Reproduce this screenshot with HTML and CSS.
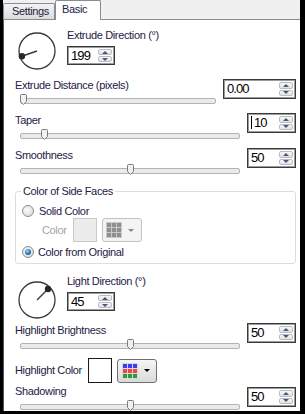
FILE: index.html
```html
<!DOCTYPE html>
<html lang="en">
<head>
    <meta charset="UTF-8">
    <title>Extrude - Basic</title>
    <link rel="stylesheet" href="styles.css">
</head>
<body>

<div class="window">
    <div class="tabs">
        <div class="tab">Settings</div>
        <div class="tab active">Basic</div>
    </div>

    <div class="panel">
        <!-- Extrude direction dial -->
        <div class="dial-row" id="row-direction">
            <svg class="dial" width="40" height="40" viewBox="0 0 40 40">
                <circle class="rim" cx="20" cy="20" r="18"/>
                <line x1="20" y1="20" x2="4.9" y2="25.2"/>
                <circle class="knob" cx="4.9" cy="25.2" r="3.2"/>
            </svg>
            <div class="dial-fields">
                <div class="label">Extrude Direction (°)</div>
                <div class="spin narrow">
                    <span class="value">199</span>
                    <span class="arrows"><span class="up"></span><span class="down"></span></span>
                </div>
            </div>
        </div>

        <div class="slider-row" id="row-distance">
            <div class="slider-main">
                <div class="label">Extrude Distance (pixels)</div>
                <div class="slider">
                    <svg class="thumb" style="left: calc((100% - 7px) * 0)" width="7" height="11" viewBox="0 0 7 11"><path d="M0.5 1.5Q0.5 0.5 1.5 0.5H5.5Q6.5 0.5 6.5 1.5V7.5L3.5 10.5L0.5 7.5Z"/></svg>
                </div>
            </div>
            <div class="spin wide">
                <span class="value">0.00</span>
                <span class="arrows"><span class="up"></span><span class="down"></span></span>
            </div>
        </div>

        <div class="slider-row" id="row-taper">
            <div class="slider-main">
                <div class="label">Taper</div>
                <div class="slider">
                    <svg class="thumb" style="left: calc((100% - 7px) * 0.1)" width="7" height="11" viewBox="0 0 7 11"><path d="M0.5 1.5Q0.5 0.5 1.5 0.5H5.5Q6.5 0.5 6.5 1.5V7.5L3.5 10.5L0.5 7.5Z"/></svg>
                </div>
            </div>
            <div class="spin">
                <span class="value"><span class="caret"></span>10</span>
                <span class="arrows"><span class="up"></span><span class="down"></span></span>
            </div>
        </div>

        <div class="slider-row" id="row-smooth">
            <div class="slider-main">
                <div class="label">Smoothness</div>
                <div class="slider">
                    <svg class="thumb" style="left: calc((100% - 7px) * 0.5)" width="7" height="11" viewBox="0 0 7 11"><path d="M0.5 1.5Q0.5 0.5 1.5 0.5H5.5Q6.5 0.5 6.5 1.5V7.5L3.5 10.5L0.5 7.5Z"/></svg>
                </div>
            </div>
            <div class="spin">
                <span class="value">50</span>
                <span class="arrows"><span class="up"></span><span class="down"></span></span>
            </div>
        </div>

        <!-- Side faces group -->
        <fieldset class="group">
            <legend>Color of Side Faces</legend>
            <div class="option" id="opt-solid">
                <span class="radio"></span>
                <span>Solid Color</span>
            </div>
            <div class="color-row disabled">
                <span class="label">Color</span>
                <span class="swatch"></span>
                <span class="color-drop">
                    <svg width="16" height="16" viewBox="0 0 16 16">
                        <rect width="16" height="16" fill="#c9c9c9"/>
                        <g fill="#8f8f8f">
                            <rect x="1" y="1" width="4" height="4"/><rect x="6" y="1" width="4" height="4"/><rect x="11" y="1" width="4" height="4"/>
                            <rect x="1" y="6" width="4" height="4"/><rect x="6" y="6" width="4" height="4"/><rect x="11" y="6" width="4" height="4"/>
                            <rect x="1" y="11" width="4" height="4"/><rect x="6" y="11" width="4" height="4"/><rect x="11" y="11" width="4" height="4"/>
                        </g>
                    </svg>
                    <span class="drop-arrow"></span>
                </span>
            </div>
            <div class="option" id="opt-original">
                <span class="radio checked"></span>
                <span>Color from Original</span>
            </div>
        </fieldset>

        <!-- Light direction dial -->
        <div class="dial-row" id="row-light">
            <svg class="dial" width="40" height="40" viewBox="0 0 40 40">
                <circle class="rim" cx="20" cy="20" r="18"/>
                <line x1="20" y1="20" x2="31" y2="9"/>
                <circle class="knob" cx="31" cy="9" r="3.2"/>
            </svg>
            <div class="dial-fields">
                <div class="label">Light Direction (°)</div>
                <div class="spin narrow">
                    <span class="value">45</span>
                    <span class="arrows"><span class="up"></span><span class="down"></span></span>
                </div>
            </div>
        </div>

        <div class="slider-row" id="row-brightness">
            <div class="slider-main">
                <div class="label">Highlight Brightness</div>
                <div class="slider">
                    <svg class="thumb" style="left: calc((100% - 7px) * 0.5)" width="7" height="11" viewBox="0 0 7 11"><path d="M0.5 1.5Q0.5 0.5 1.5 0.5H5.5Q6.5 0.5 6.5 1.5V7.5L3.5 10.5L0.5 7.5Z"/></svg>
                </div>
            </div>
            <div class="spin">
                <span class="value">50</span>
                <span class="arrows"><span class="up"></span><span class="down"></span></span>
            </div>
        </div>

        <div class="color-row" id="row-highlight">
            <span class="label">Highlight Color</span>
            <span class="swatch"></span>
            <span class="color-drop">
                <svg width="16" height="16" viewBox="0 0 16 16">
                    <rect width="16" height="16" fill="#d8d8d8"/>
                    <g fill="#3b3bf6">
                        <rect x="1" y="1" width="4" height="4"/><rect x="6" y="1" width="4" height="4"/><rect x="11" y="1" width="4" height="4"/>
                    </g>
                    <g fill="#f54646">
                        <rect x="1" y="6" width="4" height="4"/><rect x="6" y="6" width="4" height="4"/><rect x="11" y="6" width="4" height="4"/>
                    </g>
                    <g fill="#2e9a3e">
                        <rect x="1" y="11" width="4" height="4"/><rect x="6" y="11" width="4" height="4"/><rect x="11" y="11" width="4" height="4"/>
                    </g>
                </svg>
                <span class="drop-arrow"></span>
            </span>
        </div>

        <div class="slider-row" id="row-shadow">
            <div class="slider-main">
                <div class="label">Shadowing</div>
                <div class="slider">
                    <svg class="thumb" style="left: calc((100% - 7px) * 0.5)" width="7" height="11" viewBox="0 0 7 11"><path d="M0.5 1.5Q0.5 0.5 1.5 0.5H5.5Q6.5 0.5 6.5 1.5V7.5L3.5 10.5L0.5 7.5Z"/></svg>
                </div>
            </div>
            <div class="spin">
                <span class="value">50</span>
                <span class="arrows"><span class="up"></span><span class="down"></span></span>
            </div>
        </div>
    </div>
</div>

</body>
</html>
```

FILE: styles.css
```css
* {
    box-sizing: border-box;
}

body {
    margin: 0;
    width: 305px;
    height: 414px;
    overflow: hidden;
    background-color: #000;
    font-family: "Liberation Sans", Arial, sans-serif;
    font-size: 11px;
    letter-spacing: -0.35px;
    color: #1e2044;
}

.window {
    margin-left: 3px;
    width: 297px;
    height: 411px;
    background-color: #f0f0f0;
    display: flex;
    flex-direction: column;
}

/* Tab strip */
.tabs {
    height: 20px;
    flex-shrink: 0;
    display: flex;
    align-items: flex-end;
    border-bottom: 1px solid #898c95;
}

.tab {
    width: 52px;
    height: 16px;
    padding: 1px 0 0 8px;
    line-height: 13px;
    border: 1px solid #898c95;
    border-bottom: none;
    border-radius: 2px 2px 0 0;
    background: linear-gradient(#f3f3f3, #dcdcdc);
}

.tab.active {
    width: 46px;
    height: 20px;
    margin-bottom: -1px;
    padding: 2px 0 0 6px;
    background: #fff;
}

/* Page body */
.panel {
    flex: 1;
    overflow: hidden;
    background-color: #fff;
    border-left: 1px solid #555;
    padding: 0 4px 0 11px;
}

.label {
    line-height: 13px;
    white-space: nowrap;
}

/* Dials */
.dial-row {
    display: flex;
    align-items: flex-start;
}

#row-direction {
    margin-top: 9px;
}

#row-light {
    margin-top: 11px;
}

.dial {
    margin: 2px 0 0 2px;
    flex-shrink: 0;
}

#row-light .dial {
    margin-top: 5px;
}

.dial .rim {
    fill: #fff;
    stroke: #3a3a3a;
    stroke-width: 1.3;
}

.dial line {
    stroke: #3a3a3a;
    stroke-width: 1.5;
}

.dial .knob {
    fill: #262626;
}

.dial-fields {
    margin-left: 10px;
}

.dial-fields .spin {
    margin-top: 4px;
}

/* Spin boxes */
.spin {
    display: flex;
    width: 49px;
    height: 20px;
    padding: 1px;
    border: 1px solid #3a3a3a;
    box-shadow: inset 0 0 0 1px #9c9c9c;
    background-color: #fff;
    flex-shrink: 0;
}

.spin.narrow {
    width: 48px;
    height: 19px;
}

.spin.wide {
    width: 73px;
}

.spin .value {
    flex: 1;
    padding-left: 2px;
    font-size: 13px;
    letter-spacing: -0.9px;
    line-height: 16px;
    color: #000;
}

.spin.narrow .value {
    line-height: 15px;
}

.caret {
    display: inline-block;
    width: 1px;
    height: 13px;
    margin-right: 2px;
    vertical-align: -2px;
    background-color: #000;
}

.arrows {
    width: 15px;
    display: flex;
    flex-direction: column;
    gap: 1px;
    padding: 1px 1px 1px 0;
}

.arrows span {
    flex: 1;
    display: flex;
    align-items: center;
    justify-content: center;
    border: 1px solid #b7bcc6;
    border-radius: 2px;
    background: linear-gradient(#f7f7f7, #e3e3e3);
}

.arrows .up::after {
    content: "";
    border-left: 3px solid transparent;
    border-right: 3px solid transparent;
    border-bottom: 3px solid #4a5878;
}

.arrows .down::after {
    content: "";
    border-left: 3px solid transparent;
    border-right: 3px solid transparent;
    border-top: 3px solid #4a5878;
}

/* Slider rows */
.slider-row {
    display: flex;
    align-items: flex-start;
}

#row-distance {
    margin-top: 8px;
}

#row-taper,
#row-smooth {
    margin-top: 9px;
}

#row-taper .spin,
#row-smooth .spin {
    margin-top: -1px;
}

#row-brightness {
    margin-top: 3px;
}

#row-brightness .label {
    margin-top: 1px;
}

#row-shadow {
    margin-top: 2px;
}

#row-shadow .spin {
    margin-top: 2px;
}

.slider-main {
    flex: 1;
}

.slider {
    position: relative;
    height: 11px;
    margin: 2px 7px 0 5px;
}

.slider::before {
    content: "";
    position: absolute;
    left: 0;
    right: 0;
    top: 4px;
    height: 4px;
    border: 1px solid #b3b3b3;
    border-radius: 2px;
    background-color: #e9eaea;
}

.thumb {
    position: absolute;
    top: 0;
}

.thumb path {
    fill: #f1f1f1;
    stroke: #7b7b7b;
}

/* Group box */
.group {
    margin: 10px 0 0;
    padding: 0 0 5px 5px;
    border: 1px solid #d5dfe5;
    border-radius: 3px;
}

.group legend {
    padding: 0 2px;
    line-height: 13px;
}

.option {
    display: flex;
    align-items: center;
    gap: 5px;
    height: 13px;
    margin-left: 1px;
    white-space: nowrap;
}

#opt-solid {
    margin-top: 6px;
}

#opt-original {
    margin-top: 3px;
    gap: 4px;
}

.radio {
    position: relative;
    width: 12px;
    height: 12px;
    flex-shrink: 0;
    border: 1px solid #8c8e90;
    border-radius: 50%;
    background: radial-gradient(circle at 40% 40%, #fdfdfd, #d3d3d3);
}

.radio.checked::after {
    content: "";
    position: absolute;
    inset: 2px;
    border-radius: 50%;
    background: radial-gradient(circle at 40% 35%, #a6dcff, #1f6fc0 55%, #0b3c78);
}

/* Colour pickers */
.color-row {
    display: flex;
    align-items: center;
    height: 24px;
}

.group .color-row {
    margin-top: 1px;
    padding-left: 21px;
}

.color-row.disabled .label {
    color: #a3a3a3;
}

.swatch {
    width: 24px;
    height: 24px;
    margin-left: 6px;
    border: 1px solid #c9c9c9;
    background-color: #ececec;
}

.color-drop {
    display: flex;
    align-items: center;
    gap: 6px;
    width: 40px;
    height: 24px;
    margin-left: 5px;
    padding-left: 3px;
    border: 1px solid #c2c2c2;
    border-radius: 3px;
    background-color: #f4f4f4;
}

.drop-arrow {
    border-left: 3px solid transparent;
    border-right: 3px solid transparent;
    border-top: 3px solid #8a8a8a;
}

#row-highlight {
    height: 25px;
    margin-top: 8px;
}

#row-highlight .swatch {
    height: 25px;
    border-color: #1a1a1a;
    background-color: #fff;
}

#row-highlight .color-drop {
    margin-left: 5px;
    padding-left: 4px;
    border-color: #707070;
    background: linear-gradient(#f5f5f5, #dadada);
}

#row-highlight .drop-arrow {
    border-top-color: #000;
}
```
